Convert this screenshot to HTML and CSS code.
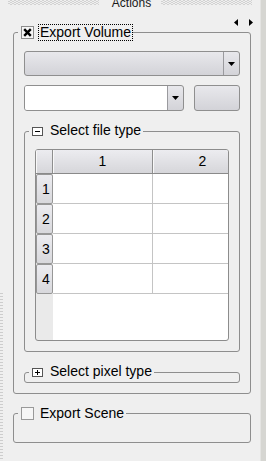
FILE: index.html
```html
<!DOCTYPE html>
<html lang="en">
<head>
  <meta charset="UTF-8" />
  <meta name="viewport" content="width=device-width, initial-scale=1.0" />
  <title>Actions</title>
  <link rel="stylesheet" href="styles.css">
</head>
<body>
  <div class="window">
    <div class="dock">
      <div class="titlebar">
        <span class="dots"></span>
        <span class="title">Actions</span>
        <span class="dots"></span>
      </div>
      <div class="nav">
        <svg width="4" height="7" viewBox="0 0 4 7"><polygon points="4,0 4,7 0,3.5" /></svg>
        <svg width="4" height="7" viewBox="0 0 4 7"><polygon points="0,0 4,3.5 0,7" /></svg>
      </div>
      <div class="dock-body">
        <div class="grip"></div>
        <div class="content">

          <div class="group volume">
            <div class="group-title">
              <svg class="check" width="13" height="13" viewBox="0 0 13 13">
                <rect x="0.5" y="0.5" width="12" height="12" fill="#f6f6f6" stroke="#8c8c8c" />
                <path d="M3.2 3.2L9.8 9.8M9.8 3.2L3.2 9.8" stroke="#000" stroke-width="2.4" />
              </svg>
              <span class="label focus">Export Volume</span>
            </div>

            <div class="combo wide">
              <div class="combo-field"></div>
              <div class="combo-arrow">
                <svg width="7" height="4" viewBox="0 0 7 4"><polygon points="0,0 7,0 3.5,4" /></svg>
              </div>
            </div>

            <div class="row">
              <div class="combo editable">
                <div class="combo-field"></div>
                <div class="combo-arrow">
                  <svg width="7" height="4" viewBox="0 0 7 4"><polygon points="0,0 7,0 3.5,4" /></svg>
                </div>
              </div>
              <div class="button"></div>
            </div>

            <div class="group sub filetype">
              <div class="group-title">
                <svg class="toggle" width="11" height="9" viewBox="0 0 11 9">
                  <rect x="0.5" y="0.5" width="10" height="8" fill="#fff" stroke="#555" />
                  <path d="M3 4.5H8" stroke="#000" />
                </svg>
                <span class="label">Select file type</span>
              </div>
              <div class="table">
                <div class="thead">
                  <div class="th corner"></div>
                  <div class="th">1</div>
                  <div class="th">2</div>
                </div>
                <div class="trow"><div class="rh">1</div><div class="td"></div><div class="td"></div></div>
                <div class="trow"><div class="rh">2</div><div class="td"></div><div class="td"></div></div>
                <div class="trow"><div class="rh">3</div><div class="td"></div><div class="td"></div></div>
                <div class="trow"><div class="rh">4</div><div class="td"></div><div class="td"></div></div>
              </div>
            </div>

            <div class="group sub pixeltype">
              <div class="group-title">
                <svg class="toggle" width="11" height="9" viewBox="0 0 11 9">
                  <rect x="0.5" y="0.5" width="10" height="8" fill="#fff" stroke="#555" />
                  <path d="M3 4.5H8M5.5 2V7" stroke="#000" />
                </svg>
                <span class="label">Select pixel type</span>
              </div>
            </div>
          </div>

          <div class="group scene">
            <div class="group-title">
              <svg class="check" width="13" height="13" viewBox="0 0 13 13">
                <rect x="0.5" y="0.5" width="12" height="12" fill="#f6f6f6" stroke="#999" />
              </svg>
              <span class="label">Export Scene</span>
            </div>
          </div>

        </div>
      </div>
    </div>
    <div class="edge"></div>
  </div>
</body>
</html>
```

FILE: styles.css
```css
* {
  box-sizing: border-box;
}
html, body {
  margin: 0;
  padding: 0;
}
body {
  width: 266px;
  height: 461px;
  overflow: hidden;
  background: #efefef;
  font-family: 'Liberation Sans', Arial, sans-serif;
  font-size: 14px;
  color: #000;
}
.window {
  display: flex;
  height: 461px;
}
.dock {
  width: 260px;
  display: flex;
  flex-direction: column;
}
.edge {
  width: 6px;
  background: #d6d6d2;
  border-left: 1px solid #e4e4e2;
}

/* dock title */
.titlebar {
  height: 9px;
  display: flex;
  align-items: flex-start;
  padding: 0 8px;
  overflow: hidden;
}
.dots {
  flex: 1;
  height: 5px;
  background: conic-gradient(#d2d2d2 25%, transparent 0 50%, #d2d2d2 0 75%, transparent 0) 0 0 / 4px 2px;
}
.title {
  font-size: 12px;
  line-height: 14px;
  margin: -4px 10px 0 13px;
  color: #1a1a1a;
}
.nav {
  height: 17px;
  display: flex;
  justify-content: flex-end;
  align-items: flex-start;
  gap: 11px;
  padding: 10px 7px 0 0;
}
.nav svg {
  display: block;
  fill: #000;
}

.dock-body {
  flex: 1;
  display: flex;
}
.grip {
  width: 3px;
  margin-top: 267px;
  background: repeating-linear-gradient(#cdcdcd 0 1px, transparent 1px 3px);
}
.content {
  padding-left: 10px;
}

/* group boxes */
.group {
  display: flex;
  flex-direction: column;
  border: 1px solid #8e8e8e;
  border-radius: 3px;
}
.group-title {
  display: flex;
  align-items: flex-start;
  align-self: flex-start;
  height: 17px;
  gap: 4px;
  padding-left: 3px;
  margin: -9px 0 0 -6px;
  background: #efefef;
}
.check {
  display: block;
  margin-top: 2px;
}
.toggle {
  display: block;
  margin-top: 5px;
  margin-right: 1px;
}
.label {
  line-height: 15px;
  padding: 0 1px;
  border: 1px dotted transparent;
  white-space: nowrap;
}
.label.focus {
  border-color: #000;
}

.volume {
  width: 238px;
  margin-top: 6px;
  padding: 0 10px 10px;
}
.scene {
  width: 238px;
  margin-top: 19px;
  padding: 0 10px 20px;
}
.sub {
  width: 216px;
  padding: 0 10px 10px;
}
.sub .group-title {
  margin-top: -10px;
}
.filetype {
  margin-top: 20px;
}
.pixeltype {
  margin-top: 20px;
  padding-bottom: 2px;
}

/* combos and buttons */
.combo {
  display: flex;
  border: 1px solid #8f8f8f;
  border-radius: 3px;
  background: linear-gradient(#e8e8ec, #d3d3d8);
}
.combo.wide {
  height: 25px;
  margin-top: 10px;
}
.combo-field {
  flex: 1;
}
.combo-arrow {
  width: 16px;
  display: flex;
  align-items: center;
  justify-content: center;
  border-left: 1px solid #9a9a9e;
}
.combo-arrow svg {
  display: block;
  fill: #000;
}
.row {
  display: flex;
  gap: 10px;
  height: 26px;
  margin-top: 9px;
}
.combo.editable {
  width: 160px;
}
.editable .combo-field {
  background: #fff;
  border-radius: 2px 0 0 2px;
}
.button {
  flex: 1;
  border: 1px solid #8f8f8f;
  border-radius: 3px;
  background: linear-gradient(#e8e8ec, #d3d3d8);
}

/* table */
.table {
  height: 192px;
  margin-top: 10px;
  border: 1px solid #8c8c8c;
  border-radius: 3px;
  overflow: hidden;
  background: linear-gradient(90deg, #eaeaea 17px, #fff 17px);
}
.thead,
.trow {
  display: grid;
  grid-template-columns: 17px 100px 100px;
}
.thead {
  height: 24px;
  border-bottom: 1px solid #8a8a8a;
}
.th {
  background: linear-gradient(#ececf0, #d6d6da);
  border-right: 1px solid #8e8e8e;
  box-shadow: inset 1px 0 #f8f8f8;
  text-align: center;
  line-height: 23px;
}
.trow {
  height: 30px;
}
.rh {
  border: 1px solid #979797;
  border-radius: 2px;
  background: linear-gradient(#ececf0, #d8d8dc);
  padding-left: 5px;
  line-height: 28px;
}
.td {
  background: #fff;
  border-right: 1px solid #c4c4c4;
  border-bottom: 1px solid #c4c4c4;
}
```
